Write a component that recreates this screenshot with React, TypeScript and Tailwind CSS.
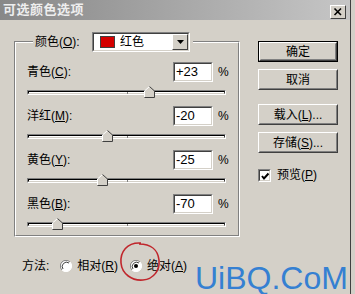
import type { ReactNode } from 'react'

const font = { fontFamily: '"Liberation Sans", "Noto Sans CJK SC", sans-serif' }

function Sunken({ className, children }: { className: string; children?: ReactNode }) {
  return (
    <div className={`border border-t-[#808080] border-l-[#808080] border-b-white border-r-white ${className}`}>
      <div className="h-full border border-t-[#404040] border-l-[#404040] border-b-[#d4d0c8] border-r-[#d4d0c8] bg-white">
        {children}
      </div>
    </div>
  )
}

function Button({ label, isDefault }: { label: ReactNode; isDefault?: boolean }) {
  const inner = (
    <div className="h-full border border-t-white border-l-white border-b-[#404040] border-r-[#404040]">
      <div className="flex h-full items-center justify-center border border-t-[#d4d0c8] border-l-[#d4d0c8] border-b-[#808080] border-r-[#808080] text-[12px] text-black">
        {label}
      </div>
    </div>
  )
  return isDefault ? (
    <div className="h-[21px] w-[80px] border border-black">{inner}</div>
  ) : (
    <div className="h-[21px] w-[80px]">{inner}</div>
  )
}

function Thumb({ value }: { value: number }) {
  // range -100..100 across the track
  const left = ((value + 100) / 200) * 199
  return (
    <svg
      className="absolute top-[-5px]"
      style={{ left: left - 6 }}
      width="11"
      height="12"
      viewBox="0 0 11 12"
    >
      <polygon points="5.5,0.5 10.5,5 10.5,11.5 0.5,11.5 0.5,5" fill="#d4d0c8" />
      <polyline points="0.5,11 0.5,5 5.5,0.5" fill="none" stroke="#ffffff" strokeWidth="1" />
      <polyline points="5.5,0.5 10.5,5 10.5,11.5 0.5,11.5" fill="none" stroke="#404040" strokeWidth="1" />
    </svg>
  )
}

function Slider({ value }: { value: number }) {
  return (
    <div className="relative mx-[11px] mt-[8px] mb-[11px] h-[5px] w-[199px] border border-t-[#808080] border-l-[#808080] border-b-white border-r-white">
      <div className="h-full border-t border-l border-r border-b border-t-black border-l-black border-r-[#404040] border-b-[#d4d0c8] bg-white" />
      <div className="absolute left-[99px] top-[1px] h-[2px] w-px bg-[#808080]" />
      <Thumb value={value} />
    </div>
  )
}

const rows = [
  { name: '青色', key: 'C', value: 23, text: '+23' },
  { name: '洋红', key: 'M', value: -20, text: '-20' },
  { name: '黄色', key: 'Y', value: -25, text: '-25' },
  { name: '黑色', key: 'B', value: -70, text: '-70' },
]

function Radio({ checked }: { checked?: boolean }) {
  return (
    <svg width="12" height="12" viewBox="0 0 12 12">
      <circle cx="6" cy="6" r="5.5" fill="#ffffff" />
      <path d="M10 2 A5.5 5.5 0 0 0 2 10" fill="none" stroke="#808080" />
      <path d="M2 10 A5.5 5.5 0 0 0 10 2" fill="none" stroke="#ffffff" />
      <path d="M9 3 A4.3 4.3 0 0 0 3 9" fill="none" stroke="#404040" />
      {checked && <circle cx="6" cy="6" r="2" fill="#000000" />}
    </svg>
  )
}

export default function App() {
  return (
    <div className="relative h-[294px] w-[355px] overflow-hidden bg-[#d4d0c8] text-black" style={font}>
      <div className="w-[351px] border-r border-r-[#404040]">
        {/* Title bar */}
        <div className="flex h-[20px] items-center justify-between bg-linear-to-r from-[#888888] to-[#c6c6c6] pl-[3px] pr-[4px]">
          <span className="text-[13px] font-bold tracking-[0.5px] text-[#eeeeee]">可选颜色选项</span>
          <div className="mt-[4px] h-[14px] w-[16px] border border-t-white border-l-white border-b-[#404040] border-r-[#404040] bg-[#d4d0c8]">
            <svg width="14" height="12" viewBox="0 0 14 12">
              <path d="M3.5 2.5 L10 9 M10 2.5 L3.5 9" stroke="#000" strokeWidth="1.6" />
            </svg>
          </div>
        </div>

        <div className="h-[274px]">
          <div className="flex pl-[14px] pt-[21px]">
            {/* Group box */}
            <div className="h-[196px] w-[226px] border border-t-[#808080] border-l-[#808080] border-b-white border-r-white">
              <div className="h-full border border-t-white border-l-white border-b-[#808080] border-r-[#808080]">
                <div className="-mt-[11px] ml-[17px] flex h-[20px] w-[160px] items-center bg-[#d4d0c8] px-[2px]">
                  <span className="w-[57px] text-[12px]">
                    颜色(<span className="underline">O</span>):
                  </span>
                  <Sunken className="h-[20px] w-[98px]">
                    <div className="flex h-full items-center">
                      <div className="ml-[6px] h-[12px] w-[15px] border border-[#404040] bg-[#d40000]" />
                      <span className="ml-[5px] flex-1 text-[12px]">红色</span>
                      <div className="flex h-[16px] w-[16px] items-center justify-center border border-t-white border-l-white border-b-[#404040] border-r-[#404040] bg-[#d4d0c8]">
                        <svg width="7" height="4" viewBox="0 0 7 4">
                          <polygon points="0,0 7,0 3.5,4" fill="#000" />
                        </svg>
                      </div>
                    </div>
                  </Sunken>
                </div>

                <div className="mt-[10px]">
                  {rows.map((r) => (
                    <div key={r.key}>
                      <div className="flex h-[20px] items-center pl-[11px] pr-[10px]">
                        <span className="flex-1 text-[12px]">
                          {r.name}(<span className="underline">{r.key}</span>):
                        </span>
                        <Sunken className="h-[20px] w-[40px]">
                          <div className="flex h-full items-center pl-[1px] text-[13px]">{r.text}</div>
                        </Sunken>
                        <span className="ml-[5px] w-[10px] text-[12px]">%</span>
                      </div>
                      <Slider value={r.value} />
                    </div>
                  ))}
                </div>
              </div>
            </div>

            {/* Buttons */}
            <div className="ml-[18px] flex flex-col">
              <Button label="确定" isDefault />
              <div className="mt-[7px]">
                <Button label="取消" />
              </div>
              <div className="mt-[14px]">
                <Button
                  label={
                    <span>
                      载入(<span className="underline">L</span>)...
                    </span>
                  }
                />
              </div>
              <div className="mt-[7px]">
                <Button
                  label={
                    <span>
                      存储(<span className="underline">S</span>)...
                    </span>
                  }
                />
              </div>
              <div className="mt-[13px] flex items-center">
                <Sunken className="h-[13px] w-[13px]">
                  <svg width="11" height="11" viewBox="0 0 11 11">
                    <path d="M2 5 L4 7.5 L8.5 2.5" fill="none" stroke="#000" strokeWidth="2" />
                  </svg>
                </Sunken>
                <span className="ml-[6px] text-[12px]">
                  预览(<span className="underline">P</span>)
                </span>
              </div>
            </div>
          </div>

          {/* Method */}
          <div className="mt-[19px] flex h-[20px] items-center pl-[22px] text-[12px]">
            <span>方法:</span>
            <span className="ml-[11px] flex">
              <Radio />
            </span>
            <span className="ml-[5px]">
              相对(<span className="underline">R</span>)
            </span>
            <span className="ml-[12px] flex">
              <Radio checked />
            </span>
            <span className="ml-[5px]">
              绝对(<span className="underline">A</span>)
            </span>
          </div>
        </div>
      </div>

      {/* hand-drawn highlight */}
      <svg className="absolute left-[117px] top-[240px]" width="46" height="44" viewBox="0 0 46 44">
        <path
          d="M24 3 C10 2 3 12 4 23 C5 34 15 41 26 40 C37 39 43 30 42 20 C41 10 34 4 22 4"
          fill="none"
          stroke="#c0262c"
          strokeWidth="1.6"
        />
      </svg>

      {/* watermark */}
      <div
        className="absolute left-[195px] top-[262px] text-[32px] leading-[32px] text-[#3580d2]"
        style={{ fontFamily: '"Liberation Sans", sans-serif' }}
      >
        UiBQ.CoM
      </div>
    </div>
  )
}
